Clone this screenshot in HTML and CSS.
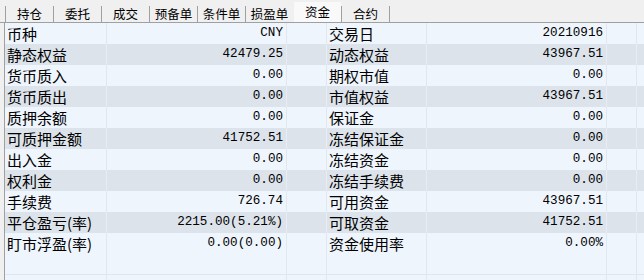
FILE: index.html
```html
<!DOCTYPE html>
<html>
<head>
<meta charset="utf-8">
<link rel="stylesheet" href="styles.css">
</head>
<body>
<div class="tabs">
  <div class="tab">持仓</div>
  <div class="tab">委托</div>
  <div class="tab">成交</div>
  <div class="tab">预备单</div>
  <div class="tab">条件单</div>
  <div class="tab">损盈单</div>
  <div class="tab active">资金</div>
  <div class="tab">合约</div>
</div>
<div class="table">
  <div class="row"><div class="lab">币种</div><div class="num">CNY</div><div class="gap"></div><div class="lab">交易日</div><div class="num">20210916</div><div class="gap"></div><div class="end"></div></div>
  <div class="row alt"><div class="lab">静态权益</div><div class="num">42479.25</div><div class="gap"></div><div class="lab">动态权益</div><div class="num">43967.51</div><div class="gap"></div><div class="end"></div></div>
  <div class="row"><div class="lab">货币质入</div><div class="num">0.00</div><div class="gap"></div><div class="lab">期权市值</div><div class="num">0.00</div><div class="gap"></div><div class="end"></div></div>
  <div class="row alt"><div class="lab">货币质出</div><div class="num">0.00</div><div class="gap"></div><div class="lab">市值权益</div><div class="num">43967.51</div><div class="gap"></div><div class="end"></div></div>
  <div class="row"><div class="lab">质押余额</div><div class="num">0.00</div><div class="gap"></div><div class="lab">保证金</div><div class="num">0.00</div><div class="gap"></div><div class="end"></div></div>
  <div class="row alt"><div class="lab">可质押金额</div><div class="num">41752.51</div><div class="gap"></div><div class="lab">冻结保证金</div><div class="num">0.00</div><div class="gap"></div><div class="end"></div></div>
  <div class="row"><div class="lab">出入金</div><div class="num">0.00</div><div class="gap"></div><div class="lab">冻结资金</div><div class="num">0.00</div><div class="gap"></div><div class="end"></div></div>
  <div class="row alt"><div class="lab">权利金</div><div class="num">0.00</div><div class="gap"></div><div class="lab">冻结手续费</div><div class="num">0.00</div><div class="gap"></div><div class="end"></div></div>
  <div class="row"><div class="lab">手续费</div><div class="num">726.74</div><div class="gap"></div><div class="lab">可用资金</div><div class="num">43967.51</div><div class="gap"></div><div class="end"></div></div>
  <div class="row alt"><div class="lab">平仓盈亏(率)</div><div class="num">2215.00(5.21%)</div><div class="gap"></div><div class="lab">可取资金</div><div class="num">41752.51</div><div class="gap"></div><div class="end"></div></div>
  <div class="row"><div class="lab">盯市浮盈(率)</div><div class="num">0.00(0.00)</div><div class="gap"></div><div class="lab">资金使用率</div><div class="num">0.00%</div><div class="gap"></div><div class="end"></div></div>
  <div class="row empty"><div class="lab"></div><div class="num"></div><div class="gap"></div><div class="lab"></div><div class="num"></div><div class="gap"></div><div class="end"></div></div>
  <div class="row empty"><div class="lab"></div><div class="num"></div><div class="gap"></div><div class="lab"></div><div class="num"></div><div class="gap"></div><div class="end"></div></div>
</div>
</body>
</html>
```
FILE: styles.css
```css
html, body {
  margin: 0;
  padding: 0;
  background: #f0f0f0;
  width: 644px;
  height: 280px;
  overflow: hidden;
}
.tabs {
  display: flex;
  height: 22px;
  padding-left: 5px;
  border-bottom: 1px solid #a0a0a0;
  background: #f0f0f0;
  font-family: "Noto Sans CJK SC", sans-serif;
  font-size: 12.5px;
  color: #000;
}
.tab {
  width: 47px;
  border-left: 1px solid #a0a0a0;
  margin-top: 6px;
  height: 16px;
  line-height: 15px;
  text-align: center;
}
.tab:last-child {
  border-right: 1px solid #a0a0a0;
}
.tab.active {
  background: #f9f9f9;
  margin-top: 2px;
  height: 20px;
  line-height: 20px;
  border-left-color: #f0f0f0;
}
.table {
  margin-left: 4px;
  border-left: 1px solid #a0a0a0;
  background: #eff5fc;
  height: 257px;
  overflow: hidden;
}
.row {
  display: grid;
  grid-template-columns: 102px 180px 40px 100px 180px 30px 1fr;
  height: 21px;
  background: #eff5fc;
}
.row.alt {
  background: #dce3ea;
}
.row.empty {
  border-bottom: 1px solid #dfe6ee;
  height: 20px;
}
.row > div {
  border-right: 1px solid #e0e7ef;
  line-height: 21px;
  white-space: nowrap;
  overflow: hidden;
}
.row.alt > div {
  border-right-color: #e8edf3;
}
.row > .end {
  border-right: none;
}
.lab {
  font-family: "Noto Sans CJK SC", sans-serif;
  font-size: 15px;
  color: #000;
  padding-left: 2px;
}
.num {
  font-family: "Liberation Mono", monospace;
  font-size: 12.6px;
  color: #000;
  text-align: right;
  padding-right: 3px;
}
```
